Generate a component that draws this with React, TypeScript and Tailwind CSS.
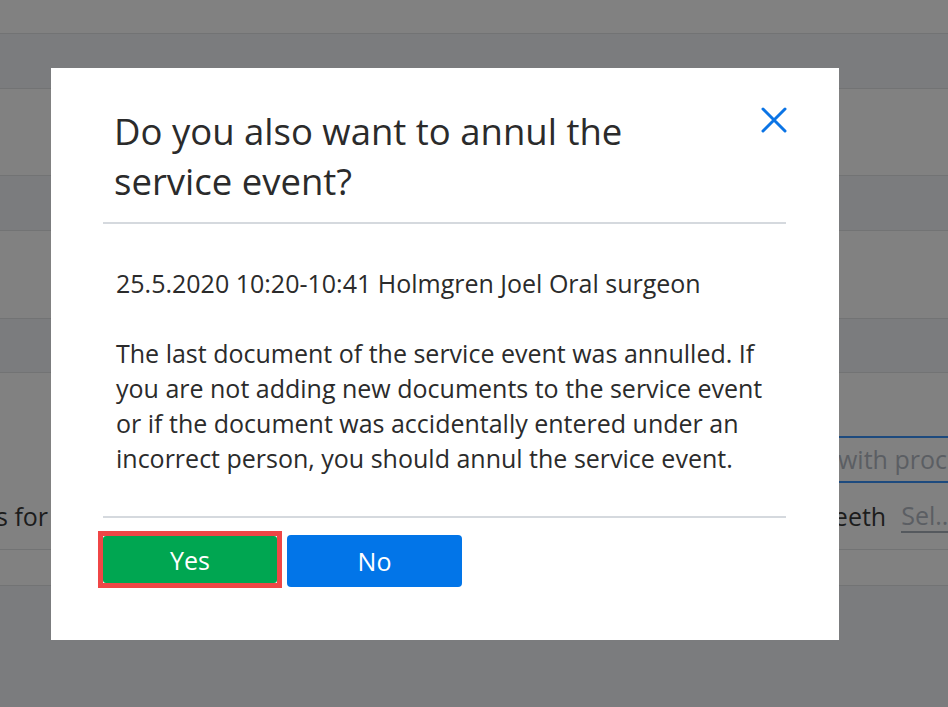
import React from "react";

const font = { fontFamily: '"Open Sans", "Noto Sans", Arial, sans-serif' };

function Band({ dark, h, children }: { dark?: boolean; h: string; children?: React.ReactNode }) {
  return (
    <div className={`${h} border-b border-[#727374] ${dark ? "bg-[#7b7c7e]" : "bg-[#818181]"}`}>{children}</div>
  );
}

function CloseIcon() {
  return (
    <svg width="26" height="26" viewBox="0 0 26 26" fill="none">
      <path d="M2 2 L24 24 M24 2 L2 24" stroke="#0b74e5" strokeWidth="3" strokeLinecap="round" />
    </svg>
  );
}

export default function App() {
  return (
    <div className="relative h-[707px] w-[948px] overflow-hidden bg-[#7b7c7e]" style={font}>
      {/* page behind the dialog backdrop */}
      <div className="flex flex-col">
        <Band h="h-[34px]" />
        <Band dark h="h-[55px]" />
        <Band h="h-[87px]" />
        <Band dark h="h-[55px]" />
        <Band h="h-[88px]" />
        <Band dark h="h-[54px]" />
        <Band h="h-[177px]">
          <div className="flex h-full flex-col pt-[63px]">
            <div className="ml-[780px] flex h-[47px] items-center border-y-2 border-[#1d4a7e] pl-[58px] text-[25px] text-[#5b5e63] whitespace-nowrap">
              with procedure
            </div>
            <div className="mt-[15px] flex items-center whitespace-nowrap text-[25px] text-[#1c1c1c]">
              <span className="ml-[-4px]">s for</span>
              <span className="ml-[772px]">Teeth</span>
              <span className="ml-[15px] border-b-2 border-[#55595e] leading-[31px] text-[#5b5e63]">Sel..</span>
            </div>
          </div>
        </Band>
        <Band h="h-[36px]" />
      </div>

      {/* dialog */}
      <div className="absolute left-[51px] top-[68px] h-[572px] w-[788px] bg-white pl-[52px] pr-[53px] pt-[38px]">
        <div className="flex items-start justify-between border-b-2 border-[#d5d9de] pb-[16px] pl-[11px]">
          <h2 className="w-[560px] text-[36.5px] leading-[50px] text-[#2b2b2b]">
            Do you also want to annul the service event?
          </h2>
          <button className="mr-[-1px] mt-[1px] flex h-[26px] w-[26px] items-center justify-center">
            <CloseIcon />
          </button>
        </div>

        <div className="pl-[13px] pt-[42px] text-[25px] leading-[35px] text-[#2b2b2b]">
          <p>25.5.2020 10:20-10:41 Holmgren Joel Oral surgeon</p>
          <p className="mt-[35px]">
            The last document of the service event was annulled. If you are not adding new documents to the service event or if the document was accidentally entered under an incorrect person, you should annul the service event.
          </p>
        </div>

        <div className="mt-[40px] border-t-2 border-[#d5d9de]" />

        <div className="mt-[13px] flex items-start">
          <div className="ml-[-5px] h-[57px] w-[184px] border-[5px] border-[#f04646] bg-white">
            <button className="flex h-full w-full items-center justify-center rounded-[3px] bg-[#00a651] pt-[3px] text-[25px] text-white">
              Yes
            </button>
          </div>
          <button className="ml-[5px] mt-[4px] flex h-[52px] w-[175px] items-center justify-center rounded-[4px] bg-[#0275e8] pt-[2px] text-[25px] text-white">
            No
          </button>
        </div>
      </div>
    </div>
  );
}
